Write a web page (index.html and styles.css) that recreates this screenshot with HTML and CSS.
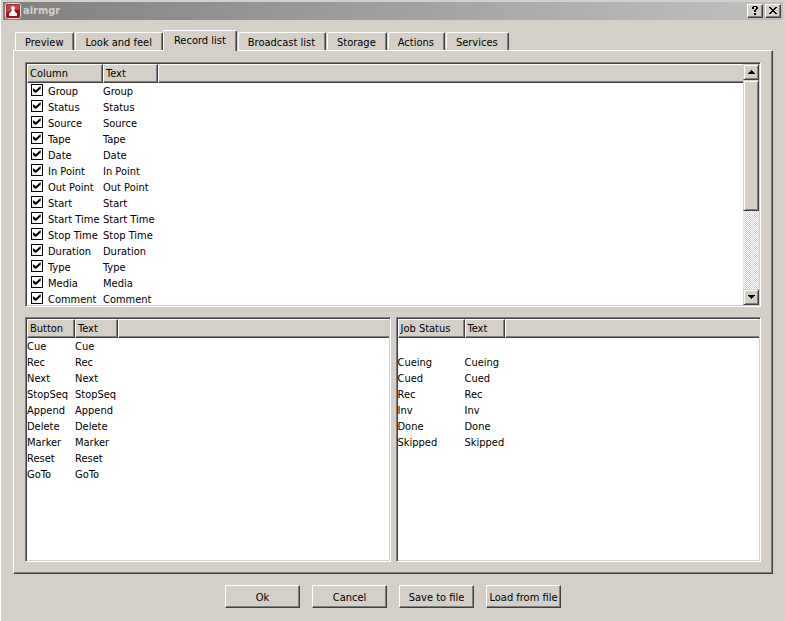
FILE: index.html
```html
<!DOCTYPE html>
<html lang="en">

<head>
    <meta charset="UTF-8" />
    <meta name="viewport" content="width=device-width, initial-scale=1.0" />
    <title>airmgr</title>
    <link rel="stylesheet" href="styles.css">
</head>

<body>
    <div class="window">
        <header class="titlebar">
            <svg class="logo" viewBox="0 0 16 16" width="16" height="16" aria-hidden="true">
                <rect x="0.5" y="0.5" width="15" height="15" rx="2" fill="#9c1418" stroke="#e8d8d8" />
                <path d="M1.5 10V3.500q0-2 2-2h9q2 0 2 2V7q-7-1-13 3z" fill="#c04448" />
                <path d="M8 3a2 2 0 0 1 2 2q0 1-1 2l2 3h1v3H4v-3h1l2-3q-1-1-1-2a2 2 0 0 1 2-2z" fill="#fff" />
            </svg>
            <h1>airmgr</h1>
            <button class="caption" type="button" aria-label="Help">
                <svg viewBox="0 0 10 10" width="10" height="10" shape-rendering="crispEdges">
                    <path d="M3 0h4v1H3zM2 1h2v2H2zM6 1h2v2H6zM5 3h2v1H5zM4 4h2v2H4zM4 7h2v2H4z" />
                </svg>
            </button>
            <button class="caption" type="button" aria-label="Close">
                <svg viewBox="0 0 10 10" width="10" height="10" shape-rendering="crispEdges">
                    <path d="M1 1h2v1H1zM7 1h2v1H7zM2 2h2v1H2zM6 2h2v1H6zM3 3h4v1H3zM4 4h2v1H4zM3 5h4v1H3zM2 6h2v1H2zM6 6h2v1H6zM1 7h2v1H1zM7 7h2v1H7z" />
                </svg>
            </button>
        </header>

        <nav class="tabs" role="tablist">
            <button class="tab" type="button" role="tab">Preview</button>
            <button class="tab" type="button" role="tab">Look and feel</button>
            <button class="tab current" type="button" role="tab" aria-selected="true">Record list</button>
            <button class="tab" type="button" role="tab">Broadcast list</button>
            <button class="tab" type="button" role="tab">Storage</button>
            <button class="tab" type="button" role="tab">Actions</button>
            <button class="tab" type="button" role="tab">Services</button>
        </nav>

        <main class="panel">
            <section class="list columns">
                <table>
                    <thead>
                        <tr>
                            <th>Column</th>
                            <th>Text</th>
                            <th></th>
                        </tr>
                    </thead>
                    <tbody>
                        <tr><td><label><input type="checkbox" checked>Group</label></td><td>Group</td></tr>
                        <tr><td><label><input type="checkbox" checked>Status</label></td><td>Status</td></tr>
                        <tr><td><label><input type="checkbox" checked>Source</label></td><td>Source</td></tr>
                        <tr><td><label><input type="checkbox" checked>Tape</label></td><td>Tape</td></tr>
                        <tr><td><label><input type="checkbox" checked>Date</label></td><td>Date</td></tr>
                        <tr><td><label><input type="checkbox" checked>In Point</label></td><td>In Point</td></tr>
                        <tr><td><label><input type="checkbox" checked>Out Point</label></td><td>Out Point</td></tr>
                        <tr><td><label><input type="checkbox" checked>Start</label></td><td>Start</td></tr>
                        <tr><td><label><input type="checkbox" checked>Start Time</label></td><td>Start Time</td></tr>
                        <tr><td><label><input type="checkbox" checked>Stop Time</label></td><td>Stop Time</td></tr>
                        <tr><td><label><input type="checkbox" checked>Duration</label></td><td>Duration</td></tr>
                        <tr><td><label><input type="checkbox" checked>Type</label></td><td>Type</td></tr>
                        <tr><td><label><input type="checkbox" checked>Media</label></td><td>Media</td></tr>
                        <tr><td><label><input type="checkbox" checked>Comment</label></td><td>Comment</td></tr>
                    </tbody>
                </table>
                <div class="scrollbar">
                    <button class="arrow" type="button" aria-label="Scroll up">
                        <svg viewBox="0 0 7 4" width="7" height="4" shape-rendering="crispEdges">
                            <path d="M3 0h1v1h1v1h1v1h1v1H0v-1h1v-1h1v-1h1z" />
                        </svg>
                    </button>
                    <div class="thumb"></div>
                    <div class="track"></div>
                    <button class="arrow" type="button" aria-label="Scroll down">
                        <svg viewBox="0 0 7 4" width="7" height="4" shape-rendering="crispEdges">
                            <path d="M0 0h7v1h-1v1h-1v1h-1v1h-1v-1h-1v-1h-1v-1H0z" />
                        </svg>
                    </button>
                </div>
            </section>

            <section class="list buttons">
                <table>
                    <thead>
                        <tr>
                            <th>Button</th>
                            <th>Text</th>
                            <th></th>
                        </tr>
                    </thead>
                    <tbody>
                        <tr><td>Cue</td><td>Cue</td></tr>
                        <tr><td>Rec</td><td>Rec</td></tr>
                        <tr><td>Next</td><td>Next</td></tr>
                        <tr><td>StopSeq</td><td>StopSeq</td></tr>
                        <tr><td>Append</td><td>Append</td></tr>
                        <tr><td>Delete</td><td>Delete</td></tr>
                        <tr><td>Marker</td><td>Marker</td></tr>
                        <tr><td>Reset</td><td>Reset</td></tr>
                        <tr><td>GoTo</td><td>GoTo</td></tr>
                    </tbody>
                </table>
            </section>

            <section class="list jobs">
                <table>
                    <thead>
                        <tr>
                            <th>Job Status</th>
                            <th>Text</th>
                            <th></th>
                        </tr>
                    </thead>
                    <tbody>
                        <tr><td></td><td></td></tr>
                        <tr><td>Cueing</td><td>Cueing</td></tr>
                        <tr><td>Cued</td><td>Cued</td></tr>
                        <tr><td>Rec</td><td>Rec</td></tr>
                        <tr><td>Inv</td><td>Inv</td></tr>
                        <tr><td>Done</td><td>Done</td></tr>
                        <tr><td>Skipped</td><td>Skipped</td></tr>
                    </tbody>
                </table>
            </section>
        </main>

        <footer class="actions">
            <button type="button">Ok</button>
            <button type="button">Cancel</button>
            <button type="button">Save to file</button>
            <button type="button">Load from file</button>
        </footer>
    </div>
</body>

</html>
```
FILE: styles.css
```css
* {
    box-sizing: border-box;
    margin: 0;
    padding: 0;
}

body {
    font-family: Tahoma, 'DejaVu Sans Condensed', 'DejaVu Sans', sans-serif;
    font-size: 11px;
    line-height: 16px;
    background: #d4d0c8;
    color: #000;
}

button {
    font: inherit;
    color: inherit;
    background: #d4d0c8;
}

.window {
    display: flex;
    flex-direction: column;
    height: 100vh;
    padding: 2px 2px 13px;
    border-left: 1px solid #fff;
}

/* Title bar */
.titlebar {
    display: flex;
    align-items: center;
    height: 18px;
    padding: 0 2px;
    background: linear-gradient(to right, #808080, #c0c0c0);
}

.logo {
    flex: none;
}

.titlebar h1 {
    flex: 1;
    margin-left: 2px;
    font-size: 11px;
    color: #d4d0c8;
}

.caption {
    display: flex;
    align-items: center;
    justify-content: center;
    width: 16px;
    height: 14px;
    margin-left: 2px;
    border: 1px solid;
    border-color: #fff #404040 #404040 #fff;
    box-shadow: inset -1px -1px #808080;
}

/* Tabs */
.tabs {
    display: flex;
    align-items: flex-end;
    height: 31px;
    margin: 0 10px -1px 12px;
}

.tab {
    height: 18px;
    margin: 0 1px 1px 0;
    padding: 2px 10px 0 9px;
    border: 1px solid;
    border-color: #fff #404040 transparent #fff;
    border-bottom: 0;
    border-radius: 2px 2px 0 0;
    box-shadow: inset -1px 0 #808080;
    white-space: nowrap;
}

.tab.current {
    position: relative;
    height: 21px;
    margin: 0 1px 0 -1px;
    padding: 0 10px 1px;
}

/* Tab page */
.panel {
    flex: 1;
    min-height: 0;
    display: grid;
    grid-template-columns: 1fr 1fr;
    grid-template-rows: 1fr 1fr;
    gap: 10px 5px;
    margin: 0 10px;
    padding: 11px;
    border: 1px solid;
    border-color: #fff #404040 #404040 #fff;
    box-shadow: inset -1px -1px #808080;
}

/* Lists */
.list {
    display: flex;
    min-height: 0;
    overflow: hidden;
    background: #fff;
    border: 1px solid;
    border-color: #808080 #fff #fff #808080;
    padding: 1px;
    box-shadow: inset 1px 1px #404040, inset -1px -1px #d4d0c8;
}

.list table {
    flex: 1;
    table-layout: fixed;
    border-collapse: separate;
    border-spacing: 0;
    align-self: flex-start;
}

.list th {
    height: 19px;
    padding: 1px 0 0 2px;
    text-align: left;
    font-weight: normal;
    background: #d4d0c8;
    border: 1px solid;
    border-color: #fff #404040 #404040 #fff;
    box-shadow: inset -1px -1px #808080;
}

.list th:last-child {
    border-right: 0;
    box-shadow: inset 0 -1px #808080;
}

.list td {
    height: 16px;
    padding-top: 2px;
    line-height: 14px;
    white-space: nowrap;
}

.columns {
    grid-column: 1 / 3;
}

.columns th:first-child {
    width: 76px;
}

.columns th:nth-child(2) {
    width: 55px;
}

.buttons th:first-child {
    width: 48px;
}

.buttons th:nth-child(2) {
    width: 43px;
}

.jobs th:first-child {
    width: 67px;
}

.jobs th:nth-child(2) {
    width: 40px;
}

.list label {
    display: flex;
    align-items: flex-start;
    gap: 5px;
    padding-left: 4px;
}

.list input {
    appearance: none;
    width: 12px;
    height: 12px;
    margin-top: -1px;
    padding: 1px;
    border: 1px solid #000;
    background: #fff;
}

.list input:checked::before {
    content: '';
    display: block;
    width: 8px;
    height: 7px;
    background: #000;
    clip-path: polygon(0 30%, 35% 60%, 95% 0, 95% 40%, 35% 100%, 0 70%);
}

/* Scroll bar */
.scrollbar {
    flex: none;
    display: flex;
    flex-direction: column;
    width: 16px;
}

.arrow,
.thumb {
    background: #d4d0c8;
    border: 1px solid;
    border-color: #d4d0c8 #404040 #404040 #d4d0c8;
    box-shadow: inset 1px 1px #fff, inset -1px -1px #808080;
}

.arrow {
    display: flex;
    align-items: center;
    justify-content: center;
    height: 16px;
}

.thumb {
    height: 131px;
}

.track {
    flex: 1;
    background: repeating-conic-gradient(#d4d0c8 0 25%, #fff 0 50%) 0 0 / 2px 2px;
}

/* Dialog buttons */
.actions {
    display: flex;
    justify-content: center;
    gap: 12px;
    margin-top: 11px;
}

.actions button {
    width: 75px;
    height: 23px;
    padding-top: 2px;
    white-space: nowrap;
    border: 1px solid;
    border-color: #fff #404040 #404040 #fff;
    box-shadow: inset -1px -1px #808080;
}
```
